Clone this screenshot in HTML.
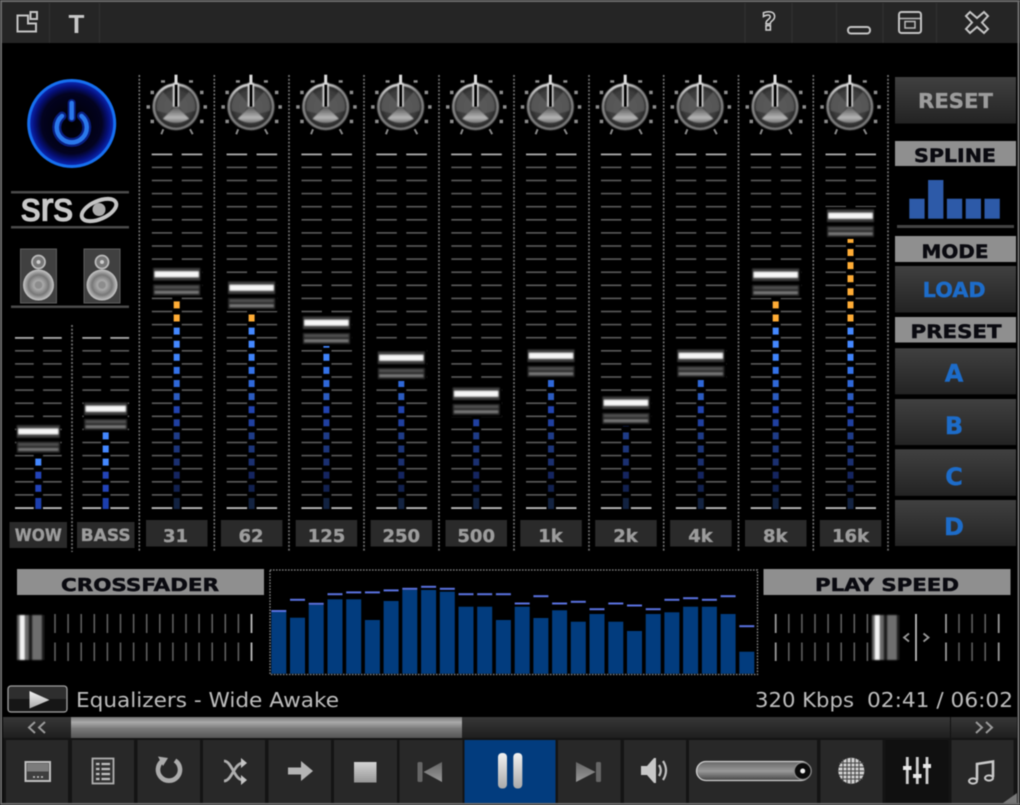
<!DOCTYPE html>
<html><head><meta charset="utf-8"><title>Equalizers</title>
<style>
html,body{margin:0;padding:0;background:#000;width:1020px;height:805px;overflow:hidden}
svg.m{display:block;filter:blur(.4px)}
text{font-family:"DejaVu Sans","Liberation Sans",sans-serif}
.b{font-weight:bold}
.lab{font-weight:bold;fill:#0a0a10;stroke:#0a0a10;stroke-width:.5;text-anchor:middle}
.eq{font-weight:bold;fill:#9c9c9c;stroke:#9c9c9c;stroke-width:.35;text-anchor:middle}
.blue{font-weight:bold;fill:#1d6cc9;stroke:#1d6cc9;stroke-width:.4;text-anchor:middle}
.ic{fill:none;stroke:#c4c4c4;stroke-width:2}
</style></head><body>
<svg class="m" width="1020" height="805" viewBox="0 0 1020 805" xmlns="http://www.w3.org/2000/svg">
<defs>
<filter id="sb" x="-10%" y="-30%" width="120%" height="160%"><feGaussianBlur stdDeviation=".8"/></filter>
<filter id="sk" x="-10%" y="-10%" width="120%" height="120%"><feGaussianBlur stdDeviation=".5"/></filter>
<filter id="sv" x="-20%" y="-5%" width="140%" height="110%"><feGaussianBlur stdDeviation=".8"/></filter>
<linearGradient id="btn" x1="0" y1="0" x2="0" y2="1"><stop offset="0" stop-color="#404040"/><stop offset="1" stop-color="#232323"/></linearGradient>
<linearGradient id="seek" x1="0" y1="0" x2="0" y2="1"><stop offset="0" stop-color="#373737"/><stop offset="1" stop-color="#1e1e1e"/></linearGradient>
<linearGradient id="prog" x1="0" y1="0" x2="0" y2="1"><stop offset="0" stop-color="#777"/><stop offset=".25" stop-color="#aaa"/><stop offset=".55" stop-color="#7a7a7a"/><stop offset="1" stop-color="#555"/></linearGradient>
<linearGradient id="wht" x1="0" y1="0" x2="0" y2="1"><stop offset="0" stop-color="#f2f2f2"/><stop offset="1" stop-color="#aaa"/></linearGradient>
<linearGradient id="gry" x1="0" y1="0" x2="0" y2="1"><stop offset="0" stop-color="#666"/><stop offset="1" stop-color="#999"/></linearGradient>
<linearGradient id="ring" x1=".3" y1="0" x2=".6" y2="1"><stop offset="0" stop-color="#e8e8e8"/><stop offset=".3" stop-color="#8a8a8a"/><stop offset="1" stop-color="#777"/></linearGradient>
<linearGradient id="cone" x1="0" y1="0" x2="0" y2="1"><stop offset="0" stop-color="#4a4a4a"/><stop offset=".7" stop-color="#b4b4b4"/><stop offset="1" stop-color="#777"/></linearGradient>
<linearGradient id="vol" x1="0" y1="0" x2="0" y2="1"><stop offset="0" stop-color="#666"/><stop offset=".5" stop-color="#999"/><stop offset="1" stop-color="#444"/></linearGradient>
<radialGradient id="kf"><stop offset="0" stop-color="#4a4a4a"/><stop offset=".75" stop-color="#3c3c3c"/><stop offset="1" stop-color="#262626"/></radialGradient>
<radialGradient id="pw"><stop offset="0" stop-color="#000"/><stop offset=".7" stop-color="#030320"/><stop offset=".86" stop-color="#06107a"/><stop offset="1" stop-color="#0c2fc0"/></radialGradient>
<radialGradient id="wf"><stop offset="0" stop-color="#666"/><stop offset=".3" stop-color="#aaa"/><stop offset=".65" stop-color="#777"/><stop offset="1" stop-color="#c8c8c8"/></radialGradient>
<pattern id="tk" patternUnits="userSpaceOnUse" x="-25" y="153.5" width="51" height="13.1"><rect x="0" y="0" width="20.5" height="1.6" fill="#5c5c5c"/><rect x="30" y="0" width="20.5" height="1.6" fill="#5c5c5c"/></pattern>
<pattern id="tk2" patternUnits="userSpaceOnUse" x="-24" y="153.5" width="49" height="13.1"><rect x="0.7" y="0" width="18.7" height="1.6" fill="#5c5c5c"/><rect x="28.7" y="0" width="18.7" height="1.6" fill="#5c5c5c"/></pattern>
<g id="col">
<rect x="-25" y="153" width="51" height="355.5" fill="url(#tk)"/>
<rect x="-25" y="153.5" width="20.5" height="1.8" fill="#aaa"/><rect x="5" y="153.5" width="20.5" height="1.8" fill="#aaa"/>
<rect x="-25" y="507.2" width="20.5" height="1.8" fill="#bbb"/><rect x="5" y="507.2" width="20.5" height="1.8" fill="#bbb"/>
</g>
<g id="leds">
<g fill="#ffac35"><rect x="-3" y="235.9" width="6" height="7"/><rect x="-3" y="249" width="6" height="7"/><rect x="-3" y="262.1" width="6" height="7"/><rect x="-3" y="275.2" width="6" height="7"/><rect x="-3" y="288.3" width="6" height="7"/><rect x="-3" y="301.4" width="6" height="7"/><rect x="-3" y="314.5" width="6" height="7"/></g>
<rect x="-3" y="327.6" width="6" height="7" fill="#4488ff"/>
<rect x="-3" y="340.7" width="6" height="7" fill="#4488ff"/>
<rect x="-3" y="353.8" width="6" height="7" fill="#4084fa"/>
<rect x="-3" y="366.9" width="6" height="7" fill="#3472e8"/>
<rect x="-3" y="380" width="6" height="7" fill="#2f68d8"/>
<rect x="-3" y="393.1" width="6" height="7" fill="#2c5cc0"/>
<rect x="-3" y="406.2" width="6" height="7" fill="#2244b0"/>
<rect x="-3" y="419.3" width="6" height="7" fill="#2040a0"/>
<rect x="-3" y="432.4" width="6" height="7" fill="#1f3c88"/>
<rect x="-3" y="445.5" width="6" height="7" fill="#1d367a"/>
<rect x="-3" y="458.6" width="6" height="7" fill="#1b3070"/>
<rect x="-3" y="471.7" width="6" height="7" fill="#152560"/>
<rect x="-3" y="484.800" width="6" height="7" fill="#132250"/>
<rect x="-3" y="498" width="6" height="11" fill="#122240"/>
</g>
<g id="th">
<rect x="-25.500" y="-9" width="51" height="32" fill="#000"/>
<g filter="url(#sb)">
<rect x="-23.500" y="-6.500" width="47" height="12.500" fill="#3e3e3e"/>
<rect x="-22" y="-3" width="44" height="5.500" fill="#f6f6f6"/>
<rect x="-23.500" y="10" width="47" height="11" fill="#2c2c2c"/>
<rect x="-22" y="11.500" width="44" height="2.500" fill="#505050"/>
<rect x="-22" y="16.500" width="44" height="2.500" fill="#787878"/>
</g>
</g>
<g id="thS">
<rect x="-22" y="-9" width="44" height="32" fill="#000"/>
<g filter="url(#sb)">
<rect x="-21.500" y="-6.500" width="43" height="12.500" fill="#3e3e3e"/>
<rect x="-20" y="-3" width="40" height="5.500" fill="#f6f6f6"/>
<rect x="-21.500" y="10" width="43" height="11" fill="#2c2c2c"/>
<rect x="-20" y="11.500" width="40" height="2.500" fill="#505050"/>
<rect x="-20" y="16.500" width="40" height="2.500" fill="#787878"/>
</g>
</g>
<g id="kn">
<g fill="#8c8c8c"><rect x="-29.500" y="-1.500" width="3.500" height="3.500"/><rect x="27.500" y="-1.500" width="3.500" height="3.500"/><rect x="-25.500" y="-16" width="3.500" height="3.500"/><rect x="24" y="-16" width="3.500" height="3.500"/><rect x="-25.500" y="13" width="3.500" height="3.500"/><rect x="24" y="13" width="3.500" height="3.500"/><rect x="-15" y="-26.500" width="4" height="2.500"/><rect x="13" y="-26.500" width="4" height="2.500"/></g>
<path d="M-12.700 22.500l-2 5M14 22.500l2.700 5" stroke="#888" stroke-width="2" fill="none"/>
<g filter="url(#sk)">
<circle r="23.500" fill="url(#ring)"/>
<circle r="21" fill="url(#kf)"/>
<path d="M-2 -2L-13 -15A20 20 0 0 0 -19 4L-8 7ZM2 -2L13 -15A20 20 0 0 1 19 4L8 7Z" fill="#626262" opacity=".7"/>
<path d="M0 -1L-13 12Q0 20 13 12Z" fill="url(#cone)"/>
<rect x="-3" y="-24" width="6" height="24" fill="#d8d8d8"/>
</g>
<rect x="-1.500" y="-32" width="3" height="9" fill="#ddd"/>
<rect x="-1.300" y="-22" width="2.800" height="22" fill="#000"/>
</g>
<g id="sp">
<rect x="0" y="0" width="36" height="54" fill="#404040" stroke="#5e5e5e" stroke-width="1"/>
<circle cx="18" cy="13" r="6.500" fill="#777" stroke="#bbb" stroke-width="1.800"/><circle cx="18" cy="13" r="2" fill="#ccc"/>
<circle cx="18" cy="36" r="15.500" fill="url(#wf)"/><circle cx="18" cy="36" r="3.500" fill="#8c8c8c"/>
</g>
<g id="fd">
<rect x="0" y="0" width="9" height="45" fill="#f0f0f0" opacity="0"/>
<rect x="0" y="0" width="28" height="45" fill="#1a1a1a"/>
<rect x="1" y="0" width="11" height="45" fill="#6a6a6a"/>
<rect x="3.500" y="0" width="4.500" height="45" fill="#f4f4f4"/>
<rect x="16" y="0" width="9" height="45" fill="#6e6e6e"/>
</g>
</defs>

<rect width="1020" height="805" fill="#000"/>
<!-- title bar -->
<rect x="0" y="2" width="1020" height="41" fill="#252525"/>
<path d="M49.500 3V43M99.500 3V43M745 3V43M792 3V43M836.500 3V43M883 3V43M936.500 3V43" stroke="#2f2f2f" stroke-width="1.500"/>
<path d="M17.500 15.500H28V23.500H36V31.500H17.500Z" class="ic"/><rect x="30.500" y="12" width="6.500" height="7" class="ic"/>
<text x="76.500" y="33" text-anchor="middle" style="font:bold 26px 'Liberation Sans',sans-serif" fill="#c8c8c8">T</text>
<text x="769" y="30" text-anchor="middle" class="b" font-size="25" fill="#222" stroke="#d0d0d0" stroke-width="1.500">?</text>
<rect x="848" y="27" width="22" height="6.500" rx="3" class="ic"/>
<rect x="899" y="12" width="22" height="21" rx="2.500" class="ic"/><rect x="905" y="21.500" width="10" height="6.500" fill="none" stroke="#bbb" stroke-width="1.500"/><path d="M900 18.500H920" stroke="#bbb" stroke-width="1.500"/>
<path d="M966 16L970 12L977 18L984 12L988 16L982 22.500L988 29L984 33L977 27L970 33L966 29L972 22.500Z" class="ic"/>

<!-- power -->
<circle cx="71.700" cy="123.500" r="43" fill="url(#pw)" stroke="#1670f0" stroke-width="3"/>
<path d="M62 116A15 15 0 1 0 81.500 116" fill="none" stroke="#0a1f80" stroke-width="9" stroke-linecap="round"/>
<path d="M62 116A15 15 0 1 0 81.500 116" fill="none" stroke="#2a78ea" stroke-width="4.500" stroke-linecap="round"/>
<path d="M71.700 103V118" stroke="#0a1f80" stroke-width="8" stroke-linecap="round"/>
<path d="M71.700 103V118" stroke="#2a78ea" stroke-width="4.500" stroke-linecap="round"/>

<!-- SRS -->
<rect x="11" y="191" width="118" height="2.500" fill="#4a4a4a"/><rect x="11" y="226" width="118" height="2.500" fill="#4a4a4a"/>
<text x="21" y="220.500" style="font:40px 'Liberation Sans',sans-serif" fill="#c8c8c8" stroke="#c8c8c8" stroke-width="1.300" textLength="52" lengthAdjust="spacingAndGlyphs">srs</text>
<g transform="rotate(-24 99 210)"><ellipse cx="99" cy="210" rx="18.500" ry="9" fill="none" stroke="#c4c4c4" stroke-width="4"/></g>
<circle cx="99" cy="209.500" r="6.500" fill="#aaa"/>

<!-- speakers -->
<use href="#sp" x="20.500" y="249"/><use href="#sp" x="84" y="249"/>
<rect x="11" y="305.500" width="118" height="2.500" fill="#4a4a4a"/>

<!-- separators -->
<path d="M72 325V552M139.300 75V552M214.300 75V552M289 75V552M364 75V552M439 75V552M514 75V552M589 75V552M663.700 75V552M738.500 75V552M813.300 75V552M888 75V552" stroke="#777" stroke-width="1.600" stroke-dasharray="2 1.700"/>

<!-- small cols -->
<g transform="translate(38.300 0)"><rect x="-24" y="337" width="49" height="171" fill="url(#tk2)"/><rect x="-23.300" y="337" width="18.700" height="1.800" fill="#aaa"/><rect x="4.700" y="337" width="18.700" height="1.800" fill="#aaa"/><rect x="-23.300" y="507.200" width="18.700" height="1.800" fill="#bbb"/><rect x="4.700" y="507.200" width="18.700" height="1.800" fill="#bbb"/>
<rect x="-3" y="458.600" width="6" height="7" fill="#4488ff"/><rect x="-3" y="471.700" width="6" height="7" fill="#2344b8"/><rect x="-3" y="484.800" width="6" height="7" fill="#2344b8"/><rect x="-3" y="498" width="6" height="11" fill="#1c3fae"/>
<use href="#thS" y="431.700"/></g>
<g transform="translate(105.700 0)"><rect x="-24" y="337" width="49" height="171" fill="url(#tk2)"/><rect x="-23.300" y="337" width="18.700" height="1.800" fill="#aaa"/><rect x="4.700" y="337" width="18.700" height="1.800" fill="#aaa"/><rect x="-23.300" y="507.200" width="18.700" height="1.800" fill="#bbb"/><rect x="4.700" y="507.200" width="18.700" height="1.800" fill="#bbb"/>
<rect x="-3" y="432.400" width="6" height="7" fill="#4488ff"/><rect x="-3" y="445.500" width="6" height="7" fill="#4488ff"/><rect x="-3" y="458.600" width="6" height="7" fill="#4488ff"/><rect x="-3" y="471.700" width="6" height="7" fill="#2344b8"/><rect x="-3" y="484.800" width="6" height="7" fill="#2344b8"/><rect x="-3" y="498" width="6" height="11" fill="#1c3fae"/>
<use href="#thS" y="409"/></g>
<rect x="9.500" y="522" width="57.500" height="26" fill="#2a2a2a"/><rect x="77" y="522" width="57.500" height="26" fill="#2a2a2a"/>
<text x="38.300" y="541" class="eq" font-size="17" textLength="47" lengthAdjust="spacingAndGlyphs">WOW</text>
<text x="105.700" y="541" class="eq" font-size="17" textLength="50" lengthAdjust="spacingAndGlyphs">BASS</text>

<!-- EQ columns -->
<use href="#col" x="176.700"/><use href="#col" x="251.600"/><use href="#col" x="326.400"/><use href="#col" x="401.300"/><use href="#col" x="476.200"/><use href="#col" x="551"/><use href="#col" x="625.900"/><use href="#col" x="700.800"/><use href="#col" x="775.700"/><use href="#col" x="850.500"/>
<use href="#kn" x="176" y="106.700"/><use href="#kn" x="250.900" y="106.700"/><use href="#kn" x="325.700" y="106.700"/><use href="#kn" x="400.600" y="106.700"/><use href="#kn" x="475.500" y="106.700"/><use href="#kn" x="550.300" y="106.700"/><use href="#kn" x="625.200" y="106.700"/><use href="#kn" x="700.100" y="106.700"/><use href="#kn" x="775" y="106.700"/><use href="#kn" x="849.800" y="106.700"/>

<svg x="171.700" y="301" width="10" height="209" viewBox="-5 301 10 209"><use href="#leds"/></svg>
<svg x="246.600" y="314" width="10" height="196" viewBox="-5 314 10 196"><use href="#leds"/></svg>
<svg x="321.400" y="345" width="10" height="165" viewBox="-5 345 10 165"><use href="#leds"/></svg>
<svg x="396.300" y="380" width="10" height="130" viewBox="-5 380 10 130"><use href="#leds"/></svg>
<svg x="471.200" y="417" width="10" height="93" viewBox="-5 417 10 93"><use href="#leds"/></svg>
<svg x="546" y="380" width="10" height="130" viewBox="-5 380 10 130"><use href="#leds"/></svg>
<svg x="620.900" y="424" width="10" height="86" viewBox="-5 424 10 86"><use href="#leds"/></svg>
<svg x="695.800" y="380" width="10" height="130" viewBox="-5 380 10 130"><use href="#leds"/></svg>
<svg x="770.700" y="301" width="10" height="209" viewBox="-5 301 10 209"><use href="#leds"/></svg>
<svg x="845.500" y="239" width="10" height="271" viewBox="-5 239 10 271"><use href="#leds"/></svg>

<use href="#th" x="176.700" y="274.500"/><use href="#th" x="251.600" y="288"/><use href="#th" x="326.400" y="323"/><use href="#th" x="401.300" y="358"/><use href="#th" x="476.200" y="394"/><use href="#th" x="551" y="356"/><use href="#th" x="625.900" y="403"/><use href="#th" x="700.800" y="356"/><use href="#th" x="775.700" y="275"/><use href="#th" x="850.500" y="216"/>

<g fill="#2a2a2a"><rect x="146" y="520" width="61.500" height="26.500"/><rect x="220.900" y="520" width="61.500" height="26.500"/><rect x="295.700" y="520" width="61.500" height="26.500"/><rect x="370.600" y="520" width="61.500" height="26.500"/><rect x="445.500" y="520" width="61.500" height="26.500"/><rect x="520.300" y="520" width="61.500" height="26.500"/><rect x="595.200" y="520" width="61.500" height="26.500"/><rect x="670.100" y="520" width="61.500" height="26.500"/><rect x="745" y="520" width="61.500" height="26.500"/><rect x="819.800" y="520" width="61.500" height="26.500"/></g>
<g font-size="18"><text x="175.500" y="542" class="eq">31</text><text x="251" y="542" class="eq">62</text><text x="326.500" y="542" class="eq">125</text><text x="401.300" y="542" class="eq">250</text><text x="476.200" y="542" class="eq">500</text><text x="550.500" y="542" class="eq">1k</text><text x="625.500" y="542" class="eq">2k</text><text x="700.500" y="542" class="eq">4k</text><text x="775.200" y="542" class="eq">8k</text><text x="850.500" y="542" class="eq">16k</text></g>

<!-- right panel -->
<rect x="895" y="77" width="121" height="46.500" fill="url(#btn)"/>
<text x="955.500" y="108" class="eq" font-size="20" textLength="75" lengthAdjust="spacingAndGlyphs">RESET</text>
<rect x="895" y="141" width="121" height="25" fill="#8f8f8f"/>
<text x="955" y="162" class="lab" font-size="19" textLength="82" lengthAdjust="spacingAndGlyphs">SPLINE</text>
<g fill="#2d5aa8"><rect x="909.300" y="198.700" width="15.300" height="20"/><rect x="928.100" y="180" width="15.300" height="38.700"/><rect x="946.900" y="198.700" width="15.300" height="20"/><rect x="965.700" y="198.700" width="15.300" height="20"/><rect x="984.500" y="198.700" width="15.300" height="20"/></g>
<rect x="897" y="225" width="117" height="3" fill="#444"/>
<rect x="895" y="236" width="121" height="26" fill="#8f8f8f"/>
<text x="955" y="258" class="lab" font-size="19" textLength="67" lengthAdjust="spacingAndGlyphs">MODE</text>
<rect x="895" y="266" width="121" height="46.500" fill="url(#btn)"/>
<text x="954.200" y="297" class="blue" font-size="20" textLength="63" lengthAdjust="spacingAndGlyphs">LOAD</text>
<rect x="895" y="317" width="121" height="25.500" fill="#8f8f8f"/>
<text x="956" y="338" class="lab" font-size="19" textLength="91" lengthAdjust="spacingAndGlyphs">PRESET</text>
<rect x="895" y="348.300" width="121" height="46" fill="url(#btn)"/><rect x="895" y="399" width="121" height="46" fill="url(#btn)"/><rect x="895" y="449.300" width="121" height="46.500" fill="url(#btn)"/><rect x="895" y="500" width="121" height="46" fill="url(#btn)"/>
<g font-size="24"><text x="954" y="381.700" class="blue">A</text><text x="954" y="434" class="blue">B</text><text x="954" y="485" class="blue">C</text><text x="954" y="535" class="blue">D</text></g>

<!-- crossfader -->
<rect x="17" y="569" width="247" height="26" fill="#8f8f8f"/>
<text x="140" y="591" class="lab" font-size="18" textLength="158" lengthAdjust="spacingAndGlyphs">CROSSFADER</text>
<rect x="763.500" y="569" width="247" height="26" fill="#8f8f8f"/>
<text x="887" y="591" class="lab" font-size="18" textLength="144" lengthAdjust="spacingAndGlyphs">PLAY SPEED</text>

<path d="M55 614v19M68.100 614v19M81.200 614v19M94.300 614v19M107.400 614v19M120.500 614v19M133.600 614v19M146.700 614v19M159.800 614v19M172.900 614v19M186 614v19M199.100 614v19M212.200 614v19M225.300 614v19M238.400 614v19M55 642.500v18.500M68.100 642.500v18.500M81.200 642.500v18.500M94.300 642.500v18.500M107.400 642.500v18.500M120.500 642.500v18.500M133.600 642.500v18.500M146.700 642.500v18.500M159.800 642.500v18.500M172.900 642.500v18.500M186 642.500v18.500M199.100 642.500v18.500M212.200 642.500v18.500M225.300 642.500v18.500M238.400 642.500v18.500" stroke="#5e5e5e" stroke-width="1.600"/>
<path d="M251.500 614v19M251.500 642.500v18.500" stroke="#bbb" stroke-width="1.800"/>
<use href="#fd" x="16.500" y="615" filter="url(#sv)"/>

<path d="M788.800 614v19M801.900 614v19M815 614v19M828.100 614v19M841.200 614v19M854.300 614v19M867.400 614v19M788.800 642.500v18.500M801.900 642.500v18.500M815 642.500v18.500M828.100 642.500v18.500M841.200 642.500v18.500M854.300 642.500v18.500M867.400 642.500v18.500M959 614v19M972.100 614v19M985.200 614v19M959 642.500v18.500M972.100 642.500v18.500M985.200 642.500v18.500" stroke="#5e5e5e" stroke-width="1.600"/>
<path d="M775.700 614v19M775.700 642.500v18.500M946 614v19M946 642.500v18.500M998.700 614v19M998.700 642.500v18.500" stroke="#999" stroke-width="1.800"/>
<path d="M916 614v47" stroke="#bbb" stroke-width="1.800"/>
<use href="#fd" x="871.500" y="615" filter="url(#sv)"/>
<path d="M909 633.500l-5 4 5 4M923.500 633.500l5 4-5 4" fill="none" stroke="#999" stroke-width="1.800"/>

<!-- spectrum -->
<rect x="270" y="570" width="487.500" height="104.500" fill="none" stroke="#888" stroke-width="1.300" stroke-dasharray="1.600 1.400"/>
<g fill="#023c7e">
<rect x="271.300" y="611.700" width="15" height="62"/><rect x="290" y="617.700" width="15" height="56"/><rect x="308.700" y="605" width="15" height="68.700"/><rect x="327.500" y="599.300" width="15" height="74.400"/><rect x="346.200" y="599.300" width="15" height="74.400"/><rect x="364.900" y="620" width="15" height="53.700"/><rect x="383.600" y="601" width="15" height="72.700"/><rect x="402.300" y="590" width="15" height="83.700"/><rect x="421.100" y="590" width="15" height="83.700"/><rect x="439.800" y="591.700" width="15" height="82"/><rect x="458.500" y="606.700" width="15" height="67"/><rect x="477.200" y="606.700" width="15" height="67"/><rect x="495.900" y="620" width="15" height="53.700"/><rect x="514.700" y="606.700" width="15" height="67"/><rect x="533.400" y="618" width="15" height="55.700"/><rect x="552.100" y="610.300" width="15" height="63.400"/><rect x="570.800" y="621.700" width="15" height="52"/><rect x="589.500" y="614" width="15" height="59.700"/><rect x="608.300" y="621.700" width="15" height="52"/><rect x="627" y="631" width="15" height="42.700"/><rect x="645.700" y="614" width="15" height="59.700"/><rect x="664.400" y="612.300" width="15" height="61.400"/><rect x="683.100" y="606.700" width="15" height="67"/><rect x="701.900" y="606.700" width="15" height="67"/><rect x="720.600" y="614" width="15" height="59.700"/><rect x="739.300" y="651.700" width="15" height="22"/>
</g>
<g fill="#5a72e0">
<rect x="271.300" y="610" width="15" height="2"/><rect x="290" y="598.800" width="15" height="2"/><rect x="308.700" y="602.800" width="15" height="2"/><rect x="327.500" y="593.200" width="15" height="2"/><rect x="346.200" y="591.400" width="15" height="2"/><rect x="364.900" y="591.400" width="15" height="2"/><rect x="383.600" y="589.400" width="15" height="2"/><rect x="402.300" y="587.800" width="15" height="2"/><rect x="421.100" y="585.800" width="15" height="2"/><rect x="439.800" y="587.800" width="15" height="2"/><rect x="458.500" y="593.200" width="15" height="2"/><rect x="477.200" y="593.200" width="15" height="2"/><rect x="495.900" y="593.200" width="15" height="2"/><rect x="514.700" y="602.500" width="15" height="2"/><rect x="533.400" y="595.200" width="15" height="2"/><rect x="552.100" y="602.500" width="15" height="2"/><rect x="570.800" y="600.800" width="15" height="2"/><rect x="589.500" y="608.200" width="15" height="2"/><rect x="608.300" y="602.500" width="15" height="2"/><rect x="627" y="604.500" width="15" height="2"/><rect x="645.700" y="608.200" width="15" height="2"/><rect x="664.400" y="598.800" width="15" height="2"/><rect x="683.100" y="597.200" width="15" height="2"/><rect x="701.900" y="598.800" width="15" height="2"/><rect x="720.600" y="595.200" width="15" height="2"/><rect x="739.300" y="625.200" width="15" height="2"/>
</g>

<!-- status row -->
<rect x="8" y="686" width="59" height="26" rx="3" fill="#2e2e2e" stroke="#a0a0a0" stroke-width="1.300"/>
<rect x="9" y="699" width="57" height="12" fill="#161616"/>
<path d="M29.500 691L49.500 700L29.500 708.500Z" fill="url(#wht)"/>
<text x="76" y="707" font-size="20" fill="#bdbdbd" textLength="263" lengthAdjust="spacingAndGlyphs">Equalizers - Wide Awake</text>
<text x="755" y="707" font-size="20" fill="#bdbdbd" textLength="99" lengthAdjust="spacingAndGlyphs">320 Kbps</text>
<text x="867" y="707" font-size="20" fill="#bdbdbd" textLength="146" lengthAdjust="spacingAndGlyphs">02:41 / 06:02</text>

<!-- seek -->
<rect x="3" y="717" width="1014" height="21" fill="url(#seek)"/>
<rect x="71" y="717" width="391" height="21" fill="url(#prog)"/>
<path d="M35 722l-6 5.500 6 5.500M45 722l-6 5.500 6 5.500" fill="none" stroke="#9a9a9a" stroke-width="2"/>
<path d="M976 722l6 5.500-6 5.500M986 722l6 5.500-6 5.500" fill="none" stroke="#9a9a9a" stroke-width="2"/>
<rect x="950" y="717" width="1" height="21" fill="#111"/>

<!-- bottom bar -->
<rect x="3" y="738" width="1014" height="65" fill="#141414"/>
<g fill="#282828">
<rect x="6" y="740" width="62" height="63"/><rect x="72" y="740" width="62" height="63"/><rect x="137.500" y="740" width="62.500" height="63"/><rect x="203" y="740" width="62" height="63"/><rect x="268.500" y="740" width="62.500" height="63"/><rect x="334" y="740" width="63" height="63"/><rect x="399.500" y="740" width="63" height="63"/><rect x="558" y="740" width="62.500" height="63"/><rect x="624" y="740" width="62" height="63"/><rect x="689" y="740" width="128" height="63"/><rect x="820.500" y="740" width="62" height="63"/><rect x="951.500" y="740" width="62" height="63"/>
</g>
<rect x="464.500" y="740" width="91" height="63" fill="#023c7e"/>
<rect x="885.700" y="740" width="62.500" height="63" fill="#101010"/>

<rect x="25.500" y="762" width="24.500" height="19" fill="#3e3e3e" stroke="#c0c0c0" stroke-width="2"/><rect x="27" y="763.500" width="21.500" height="8" fill="#7c7c7c"/><path d="M33 777h11" stroke="#ccc" stroke-width="1.500" stroke-dasharray="2 2"/>
<rect x="92.500" y="758.500" width="21" height="25" fill="#333" stroke="#b0b0b0" stroke-width="1.800"/><path d="M96 764h3.500M101.500 764h8.500M96 769h3.500M101.500 769h8.500M96 774h3.500M101.500 774h8.500M96 779h3.500M101.500 779h8.500" stroke="#c0c0c0" stroke-width="2.200"/>
<path d="M163 760.500A11 11 0 1 0 175 760.500" fill="none" stroke="#ababab" stroke-width="4.600"/><path d="M158 756.500L168 758L163 766Z" fill="#ababab"/>
<path d="M224 761C232 761 234 780 243 780M224 781C232 781 234 763 243 763" fill="none" stroke="#aeaeae" stroke-width="2.800"/><path d="M241 758L247 763L241 768ZM241 775L247 780L241 785Z" fill="#c4c4c4"/>
<path d="M288 767.500H301V761L313 771L301 781V774.500H288Z" fill="#b4b4b4"/>
<rect x="354" y="762" width="22.500" height="20.500" fill="url(#wht)" opacity=".85"/>
<rect x="417.500" y="762" width="5" height="20" rx="1.500" fill="#666"/><path d="M442 762V782L423.500 772Z" fill="url(#gry)"/>
<rect x="498" y="753" width="9" height="35.500" rx="4" fill="url(#wht)"/><rect x="513.300" y="753" width="9" height="35.500" rx="4" fill="url(#wht)"/>
<path d="M576 762V782L595.500 772Z" fill="url(#gry)"/><rect x="596" y="762" width="5" height="20" rx="1.500" fill="#666"/>
<path d="M641 766H647L654 758H656V783H654L647 775H641Z" fill="#c8c8c8"/><path d="M659 765Q662.500 770.500 659 776M663 761Q669 770.500 663 780" fill="none" stroke="#c0c0c0" stroke-width="2.200"/>
<rect x="696.500" y="761.500" width="114" height="19" rx="9.500" fill="url(#vol)" stroke="#d0d0d0" stroke-width="1.300"/>
<circle cx="802.700" cy="771" r="8.500" fill="#0a0a0a" stroke="#888" stroke-width="1.300"/><circle cx="802.700" cy="771" r="2.500" fill="#eee"/>
<circle cx="851.300" cy="770.700" r="13" fill="#cfcfcf"/><path d="M839 763H864M838.500 767H864M838.500 771H864M839 775H864M840 779H863M843 759V782M847 758V783.500M851 758V783.500M855 758V783.500M859 759V782" stroke="#444" stroke-width="1" fill="none"/>
<path d="M907.300 757V784M917.300 757V784M927 757V784" stroke="#d0d0d0" stroke-width="2.800"/><path d="M903 768H911.500M913 776H921.500M923 766H931" stroke="#e8e8e8" stroke-width="4"/>
<path d="M977 780V764L993 761.500V777" fill="none" stroke="#c8c8c8" stroke-width="2.600"/><ellipse cx="973" cy="781" rx="4" ry="2.600" fill="none" stroke="#c8c8c8" stroke-width="2"/><ellipse cx="989" cy="778" rx="4" ry="2.600" fill="none" stroke="#c8c8c8" stroke-width="2"/>
<path d="M1003 803L1017 793V803Z" fill="#777"/>

<!-- frame -->
<path d="M1 0V805M1018.500 0V805M0 1H1020M0 804H1020" stroke="#6c6c6c" stroke-width="2" fill="none"/>
</svg>
</body></html>
